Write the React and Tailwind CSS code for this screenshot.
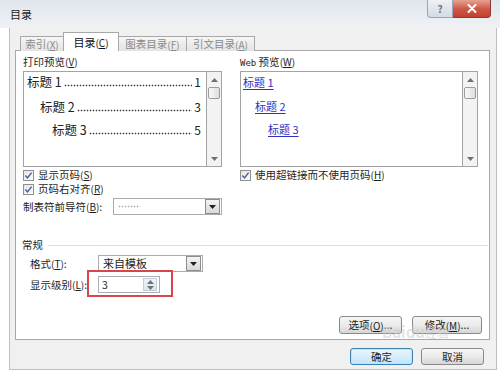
import React from "react";

function Acc({ k }) {
  return (
    <span className="text-[10px]">
      (<span className="underline">{k}</span>)
    </span>
  );
}

function Check() {
  return (
    <span className="w-[11px] h-[11px] border border-[#8e8f8f] bg-linear-to-br from-[#e4e4e4] to-[#fcfcfc] flex items-center justify-center shrink-0">
      <svg width="9" height="9" viewBox="0 0 9 9">
        <path d="M1.4 4.6 L3.5 6.9 L7.6 1.6" fill="none" stroke="#4b5f9e" strokeWidth="1.5" />
      </svg>
    </span>
  );
}

function Tri({ down = true, color = "#202020" }) {
  return (
    <svg width="7" height="4" viewBox="0 0 7 4">
      <path d={down ? "M0 0 L7 0 L3.5 4 Z" : "M0 4 L7 4 L3.5 0 Z"} fill={color} />
    </svg>
  );
}

function VScroll() {
  return (
    <div className="w-[15px] shrink-0 h-full flex flex-col bg-[#f3f3f3] border-l border-[#a3a3a3]">
      <div className="h-[15px] flex items-center justify-center">
        <Tri down={false} color="#707070" />
      </div>
      <div className="h-[12px] mx-[1px] border border-[#9c9c9c] rounded-[2px] bg-linear-to-r from-[#fafafa] to-[#dedede]" />
      <div className="flex-1" />
      <div className="h-[15px] flex items-center justify-center">
        <Tri color="#707070" />
      </div>
    </div>
  );
}

function ComboArrow() {
  return (
    <div className="w-[15px] h-[15px] mr-px shrink-0 flex items-center justify-center border border-[#8d8d8d] bg-linear-to-b from-[#f4f4f4] to-[#d9d9d9]">
      <Tri />
    </div>
  );
}

function Btn({ children, className = "" }) {
  return (
    <div
      className={
        "h-[18px] flex items-center justify-center rounded-[3px] border border-[#8a8a8a] bg-linear-to-b from-[#f6f6f6] via-[#ebebeb] to-[#d6d6d6] text-[10.5px] text-[#1a1a1a] " +
        className
      }
    >
      {children}
    </div>
  );
}

function PrintLine({ pl, label, num, mt }) {
  return (
    <div className={"flex items-center min-w-0 h-[20px] pr-[5px] " + pl + " " + mt}>
      <span className="text-[12.5px] whitespace-nowrap shrink-0">{label}</span>
      <div className="flex-1 min-w-0 h-[3px] mt-[7px] mx-[2px] bg-[radial-gradient(circle,#333_0.7px,transparent_1.1px)] bg-[length:3px_3px] bg-repeat-x" />
      <span className="text-[12px] shrink-0">{num}</span>
    </div>
  );
}

function WebLine({ pl, label, mt }) {
  return (
    <div className={"h-[18px] flex items-center " + pl + " " + mt}>
      <span className="text-[11px] text-[#3030c8] underline underline-offset-2 whitespace-nowrap">
        {label}
      </span>
    </div>
  );
}

export default function App() {
  return (
    <div className="relative w-[500px] h-[382px] bg-white overflow-hidden font-['Noto_Sans_CJK_SC','Noto_Sans',sans-serif] text-[#1e1e1e]">
      {/* title bar */}
      <div className="h-[28px] flex items-start bg-linear-to-b from-[#dfe5ec] via-[#e8ecf1] to-[#eef1f4]">
        <span className="ml-[10px] mt-[7px] text-[11px] leading-[14px] text-[#222]">目录</span>
        <div className="ml-auto mr-[9px] flex">
          <div className="w-[26px] h-[18px] flex items-center justify-center border border-[#9aa6b5] border-t-0 rounded-bl-[4px] bg-linear-to-b from-[#eef1f5] to-[#d3dbe4] text-[10px] text-[#6a7585] font-bold">
            ?
          </div>
          <div className="w-[38px] h-[18px] flex items-center justify-center border border-[#8e3a33] border-t-0 border-l-0 rounded-br-[4px] bg-linear-to-b from-[#e6a293] via-[#cf5a48] to-[#c3402e]">
            <svg width="10" height="9" viewBox="0 0 10 9">
              <path d="M1.5 1 L8.5 8 M8.5 1 L1.5 8" stroke="#fff" strokeWidth="2" strokeLinecap="round" />
            </svg>
          </div>
        </div>
      </div>

      {/* dialog body */}
      <div className="ml-[9px] w-[488px] h-[342px] bg-[#f0f0f0] border-x border-b border-[#bcbfc3] flex flex-col pt-[4px] pl-[5px] pr-[5px]">
        {/* tabs */}
        <div className="flex items-end h-[19px] ml-[5px] text-[10.5px] relative z-10">
          <div className="w-[44px] h-[15px] flex items-center justify-center border border-b-0 border-[#a8a8a8] bg-linear-to-b from-[#f6f6f6] to-[#e3e3e3] text-[#8a8a8a]">
            索引<Acc k="X" />
          </div>
          <div className="-ml-px w-[56px] h-[19px] flex items-center justify-center border border-b-0 border-[#a8a8a8] bg-white text-[#111] text-[11px]">
            目录<Acc k="C" />
          </div>
          <div className="-ml-px w-[69px] h-[15px] flex items-center justify-center border border-b-0 border-[#a8a8a8] bg-linear-to-b from-[#f6f6f6] to-[#e3e3e3] text-[#8a8a8a]">
            图表目录<Acc k="F" />
          </div>
          <div className="-ml-px w-[69px] h-[15px] flex items-center justify-center border border-b-0 border-[#a8a8a8] bg-linear-to-b from-[#f6f6f6] to-[#e3e3e3] text-[#8a8a8a]">
            引文目录<Acc k="A" />
          </div>
        </div>

        {/* panel */}
        <div className="-mt-px w-[475px] h-[290px] bg-white border border-[#a8a8a8] px-[7px] pt-[4px] flex flex-col text-[10.5px]">
          <div className="flex gap-[18px]">
            {/* left column */}
            <div className="w-[199px] shrink-0 flex flex-col">
              <div className="h-[14px] leading-[14px]">
                打印预览<Acc k="V" />
              </div>
              <div className="mt-[2px] h-[96px] border border-[#a3a3a3] bg-white flex overflow-hidden">
                <div className="flex-1 min-w-0 flex flex-col text-[#222]">
                  <PrintLine pl="pl-[3px]" label="标题 1" num="1" mt="" />
                  <PrintLine pl="pl-[16px]" label="标题 2" num="3" mt="mt-[5px]" />
                  <PrintLine pl="pl-[28px]" label="标题 3" num="5" mt="mt-[3px]" />
                </div>
                <VScroll />
              </div>
              <div className="mt-px h-[14px] flex items-center gap-[4px]">
                <Check />
                <span>
                  显示页码<Acc k="S" />
                </span>
              </div>
              <div className="h-[14px] flex items-center gap-[4px]">
                <Check />
                <span>
                  页码右对齐<Acc k="R" />
                </span>
              </div>
              <div className="mt-[2px] h-[17px] flex items-center">
                <span className="w-[90px] whitespace-nowrap">
                  制表符前导符<Acc k="B" />:
                </span>
                <div className="w-[109px] h-[17px] flex items-center border border-[#a7adb5] bg-white">
                  <div className="flex-1 flex items-center pl-[4px]">
                    <div className="w-[22px] h-[3px] bg-[radial-gradient(circle,#a8a8a8_0.7px,transparent_1.1px)] bg-[length:3px_3px] bg-repeat-x" />
                  </div>
                  <ComboArrow />
                </div>
              </div>
            </div>

            {/* right column */}
            <div className="w-[238px] shrink-0 flex flex-col">
              <div className="h-[14px] leading-[14px]">
                <span className="font-['DejaVu_Sans_Mono',monospace] text-[9px]">Web</span> 预览<Acc k="W" />
              </div>
              <div className="mt-[2px] h-[96px] border border-[#a3a3a3] bg-white flex overflow-hidden">
                <div className="flex-1 min-w-0 flex flex-col pt-px">
                  <WebLine pl="pl-[2px]" label="标题 1" mt="" />
                  <WebLine pl="pl-[14px]" label="标题 2" mt="mt-[6px]" />
                  <WebLine pl="pl-[27px]" label="标题 3" mt="mt-[5px]" />
                </div>
                <VScroll />
              </div>
              <div className="mt-px h-[14px] flex items-center gap-[4px]">
                <Check />
                <span>
                  使用超链接而不使用页码<Acc k="H" />
                </span>
              </div>
            </div>
          </div>

          {/* 常规 */}
          <div className="mt-[23px] h-[14px] flex items-center -ml-px -mr-[6px]">
            <span>常规</span>
            <div className="flex-1 ml-[5px] h-px bg-[#d9dde2]" />
          </div>
          <div className="mt-[3px] h-[17px] flex items-center pl-[7px]">
            <span className="w-[68px] whitespace-nowrap">
              格式<Acc k="T" />:
            </span>
            <div className="w-[105px] h-[17px] flex items-center border border-[#a7adb5] bg-white">
              <span className="flex-1 pl-[4px] text-[11px]">来自模板</span>
              <ComboArrow />
            </div>
          </div>
          <div className="mt-[4px] h-[17px] flex items-center pl-[7px]">
            <span className="w-[68px] whitespace-nowrap">
              显示级别<Acc k="L" />:
            </span>
            <div className="relative w-[62px] h-[17px] flex items-center border border-[#a7adb5] bg-white">
              <span className="flex-1 pl-[3px] text-[10.5px]">3</span>
              <div className="w-[14px] h-[13px] mr-[2px] flex flex-col items-center justify-center gap-[2px] border border-[#c4ccd6] bg-linear-to-b from-[#f1f4f8] to-[#dfe5ec]">
                <Tri down={false} color="#6b7480" />
                <Tri color="#6b7480" />
              </div>
              <div className="absolute -left-[12px] -top-[7px] w-[86px] h-[27px] border-2 border-[#d8464c]" />
            </div>
          </div>

          {/* options buttons */}
          <div className="mt-[23px] flex justify-end gap-[10px]">
            <Btn className="w-[63px]">
              选项<Acc k="O" />...
            </Btn>
            <Btn className="w-[70px]">
              修改<Acc k="M" />...
            </Btn>
          </div>
        </div>

        {/* OK / Cancel */}
        <div className="mt-[8px] flex justify-end gap-[8px] pr-[7px]">
          <div className="w-[63px] h-[17px] flex items-center justify-center rounded-[3px] border border-[#3c7fb1] bg-linear-to-b from-[#eaf6fd] via-[#d9eefb] to-[#bee6fd] text-[10.5px] shadow-[inset_0_0_0_1px_#c2e4f6]">
            确定
          </div>
          <div className="w-[63px] h-[17px] flex items-center justify-center rounded-[3px] border border-[#8a8a8a] bg-linear-to-b from-[#f6f6f6] via-[#ebebeb] to-[#d6d6d6] text-[10.5px]">
            取消
          </div>
        </div>
      </div>

      {/* watermark */}
      <div className="absolute left-[382px] top-[324px] text-[15px] font-bold leading-[16px] text-[rgba(205,205,205,0.55)] whitespace-nowrap pointer-events-none">
        Baidu<span className="text-[12px]">经验</span>
      </div>
    </div>
  );
}
